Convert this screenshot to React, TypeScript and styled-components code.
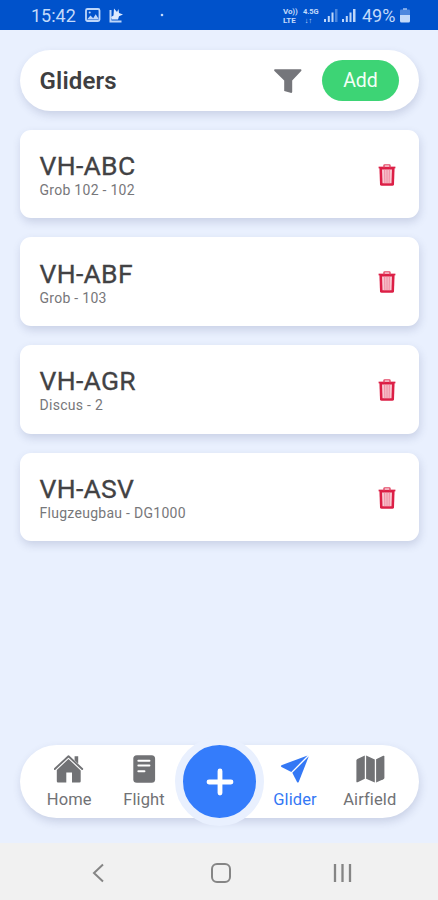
import React from "react";
import styled, { createGlobalStyle, css } from "styled-components";

const GlobalStyle = createGlobalStyle`
  * { box-sizing: border-box; }
  body { margin: 0; background: #e9f0fe; }
  button { border: 0; padding: 0; margin: 0; background: none; font: inherit; color: inherit; }
`;

const Screen = styled.div`
  width: 438px;
  height: 900px;
  display: flex;
  flex-direction: column;
  overflow: hidden;
  background: #e9f0fe;
  font-family: Roboto, sans-serif;
  color: #3f3f41;
`;

const StatusBar = styled.header`
  height: 29.5px;
  flex: none;
  display: flex;
  align-items: center;
  padding: 2px 28px 0 31px;
  background: #0052cb;
  color: #c3dafa;
`;

const Clock = styled.span`
  width: 54px;
  font-size: 18px;
  line-height: 20px;
`;

const StatusIcons = styled.svg`
  display: block;
  flex: none;
`;

const Network = styled.span<{ $width: number; $size: number }>`
  display: flex;
  flex-direction: column;
  width: ${(p) => p.$width}px;
  font-size: ${(p) => p.$size}px;
  line-height: 9px;
  font-weight: 700;
  white-space: nowrap;
  letter-spacing: -0.1px;
`;

const Spacer = styled.span`
  flex: 1;
`;

const Percent = styled.span`
  margin-left: 3px;
  width: 38px;
  font-size: 18px;
  line-height: 20px;
`;

const raised = css`
  background: #fff;
  box-shadow: 1px 4px 8px rgba(50, 60, 110, 0.17);
`;

const Content = styled.main`
  flex: 1;
  display: flex;
  flex-direction: column;
  padding: 20.5px 19px 0 20px;
`;

const TitleBar = styled.div`
  ${raised}
  height: 61px;
  border-radius: 31px;
  display: flex;
  align-items: center;
  padding: 0 20px 0 19.5px;
`;

const Title = styled.h1`
  flex: 1;
  margin: 0;
  font-size: 24px;
  line-height: 30px;
  font-weight: 600;
  letter-spacing: 0.15px;
`;

const FilterButton = styled.button`
  display: flex;
  color: #75767b;
  margin-right: 19px;
`;

const AddButton = styled.button`
  width: 77px;
  height: 41px;
  border-radius: 21px;
  background: #3dd475;
  color: #f3fff6;
  font-size: 19.5px;
  line-height: 24px;
`;

const CardList = styled.ul`
  list-style: none;
  margin: 18.8px 0 0;
  padding: 0;
  display: flex;
  flex-direction: column;
  gap: 19.2px;
`;

const Card = styled.li`
  ${raised}
  height: 88.5px;
  border-radius: 11px;
  display: flex;
  align-items: center;
  justify-content: space-between;
  padding: 2px 23px 0 19.5px;
`;

const Registration = styled.div`
  font-size: 26.5px;
  line-height: 30px;
  letter-spacing: 0.3px;
  color: #424244;
  -webkit-text-stroke: 0.3px #424244;
`;

const Model = styled.div`
  font-size: 14px;
  line-height: 18px;
  letter-spacing: 0.28px;
  color: #77777a;
`;

const DeleteButton = styled.button`
  display: flex;
`;

const TabBar = styled.nav`
  ${raised}
  flex: none;
  height: 73px;
  margin: 0 19px 25px 20px;
  border-radius: 37px;
  display: flex;
  align-items: center;
  justify-content: space-between;
  padding: 0 12px;
`;

const Tab = styled.button<{ $active?: boolean }>`
  width: 74.5px;
  height: 73px;
  padding-top: 9px;
  display: flex;
  flex-direction: column;
  align-items: center;
  justify-content: flex-start;
  gap: 6px;
  color: ${(p) => (p.$active ? "#3478f5" : "#717275")};
  font-size: 16.5px;
  line-height: 20px;
  letter-spacing: 0.1px;
`;

const CreateButton = styled.button`
  width: 89px;
  height: 89px;
  flex: none;
  margin: 0 -6.5px;
  border: 8px solid #e9f0fe;
  border-radius: 50%;
  background: #347cfb;
  display: flex;
  align-items: center;
  justify-content: center;
`;

const SystemBar = styled.footer`
  height: 57px;
  flex: none;
  background: #f1f1f1;
  display: flex;
  align-items: center;
  justify-content: space-between;
  padding: 2px 85px 0 88px;
`;

const Glyph = ({ children }: { children: React.ReactNode }) => (
  <svg width="30" height="30" viewBox="0 0 30 30" fill="currentColor">
    {children}
  </svg>
);

const HomeIcon = () => (
  <Glyph>
    <path d="M20.600 2.200h3.600v7.500l-3.600-3.400z" />
    <path d="M.8 15L14.500 2.200 28.200 15" fill="none" stroke="currentColor" strokeWidth="1.900" strokeLinecap="round" strokeLinejoin="round" />
    <path d="M14.500 5L26.700 16.400v10.900q0 1.200-1.200 1.200h-7.500V18.600h-5.700v9.900H4q-1.200 0-1.200-1.200V16z" />
  </Glyph>
);

const FlightIcon = () => (
  <Glyph>
    <rect x="4.300" y="1.200" width="21.800" height="27.600" rx="3.500" />
    <path d="M9.300 6.700h11.200M9.300 11.500h11.200M9.300 17.200h6.200" stroke="#fff" strokeWidth="1.900" strokeLinecap="round" />
  </Glyph>
);

const GliderIcon = () => (
  <Glyph>
    <path d="M27.600 1.400L1.500 11.200q-1.200.8 0 1.700L11.300 18z" />
    <path d="M28.800 2.300L18.700 28q-.9 1.200-1.700 0L12.300 18.800z" />
  </Glyph>
);

const AirfieldIcon = () => (
  <Glyph>
    <path d="M9.800 1.600v23.200l-7.200 3.500q-1.200.3-1.200-.8V6.500q0-1 1-1.500z" />
    <path d="M11.100 1.600l8.700 3.800v23.200l-8.700-3.800z" />
    <path d="M21.100 5.200l7.100-3.500q1.200-.3 1.200.8v21.200q0 1-1 1.500l-7.300 3.400z" />
  </Glyph>
);

const FunnelIcon = () => (
  <Glyph>
    <path d="M1.800 3.300h26q.9.300.6 1.500L19.200 14.600v11.300q-.3 1.300-1.700.9L11.200 25V14.600L1.200 4.800q-.3-1.200.6-1.500z" />
  </Glyph>
);

const TrashIcon = () => (
  <svg width="18" height="23" viewBox="0 0 18 23">
    <path d="M1.400 3.800h15.200l-.6 16.400q-.2 1.600-1.700 1.600H3.700q-1.500 0-1.700-1.600z" fill="#dc1f46" />
    <path d="M4 5.500h10l-.5 13.800h-9z" fill="#f8c6d0" />
    <path d="M6.700 5.500l.2 13.800M9 5.500v13.800M11.300 5.500l-.2 13.800" stroke="#ec7f95" strokeWidth=".9" fill="none" />
    <path d="M.6 3.500h16.800" stroke="#dc1f46" strokeWidth="1.700" />
    <path d="M6 3.400V1.500q0-.6.7-.6h4.600q.7 0 .7.6v1.900" stroke="#e34866" strokeWidth="1.400" fill="none" />
  </svg>
);

const Signal = ({ weak }: { weak?: boolean }) => (
  <StatusIcons width="18" height="17" viewBox="0 0 18 17" fill="#bfd7fa">
    <rect x="1" y="12" width="2" height="3" />
    <rect x="4.800" y="9" width="2" height="6" />
    <rect x="8.500" y="5.500" width="2" height="9.500" />
    <rect x="12" y="2" width="2.500" height="13" opacity={weak ? 0.4 : 1} />
  </StatusIcons>
);

const gliders = [
  { registration: "VH-ABC", model: "Grob 102 - 102" },
  { registration: "VH-ABF", model: "Grob - 103" },
  { registration: "VH-AGR", model: "Discus - 2" },
  { registration: "VH-ASV", model: "Flugzeugbau - DG1000" },
];

export default function App() {
  return (
    <Screen>
      <GlobalStyle />
      <StatusBar>
        <Clock>15:42</Clock>
        <StatusIcons width="82" height="18" viewBox="0 0 82 18">
          <rect x="1" y="2" width="13.500" height="12" rx="1.500" fill="none" stroke="#bdd6fa" strokeWidth="1.800" />
          <path d="M2 12.500l3.500-4 2.700 2.700 2.500-4 3.300 5.300z" fill="#bdd6fa" />
          <circle cx="4.700" cy="5.500" r="1" fill="#bdd6fa" />
          <path d="M25.500 3v11.500H36.500" fill="none" stroke="#bdd6fa" strokeWidth="2" />
          <path d="M29 1.500l3 3.500 1.500-3 .5 4 4 1.500-4 1.800-1 3.200h-6l-1-2.500 2.500-1.500z" fill="#dceaff" />
          <circle cx="77" cy="8" r="1.300" fill="#c3dafa" />
        </StatusIcons>
        <Spacer />
        <Network $width={20} $size={8}><span>Vo))</span><span>LTE</span></Network>
        <Network $width={20} $size={7.5}><span>4.5G</span><span>&nbsp;↓↑</span></Network>
        <Signal weak />
        <Signal />
        <Percent>49%</Percent>
        <StatusIcons width="10" height="15" viewBox="0 0 10 15" fill="#c3dafa">
          <rect x="3" width="4" height="2" opacity=".6" />
          <rect y="1.500" width="10" height="6" rx="1" opacity=".4" />
          <path d="M0 7h10v6q0 1.500-1.500 1.500h-7Q0 14.500 0 13z" />
        </StatusIcons>
      </StatusBar>
      <Content>
        <TitleBar>
          <Title>Gliders</Title>
          <FilterButton aria-label="Filter"><FunnelIcon /></FilterButton>
          <AddButton>Add</AddButton>
        </TitleBar>
        <CardList>
          {gliders.map((g) => (
            <Card key={g.registration}>
              <div>
                <Registration>{g.registration}</Registration>
                <Model>{g.model}</Model>
              </div>
              <DeleteButton aria-label="Delete"><TrashIcon /></DeleteButton>
            </Card>
          ))}
        </CardList>
      </Content>
      <TabBar>
        <Tab><HomeIcon />Home</Tab>
        <Tab><FlightIcon />Flight</Tab>
        <CreateButton aria-label="Create">
          <svg width="28" height="28" viewBox="0 0 28 28">
            <path d="M14 3v22M3 14h22" stroke="#fff" strokeWidth="4.800" strokeLinecap="round" />
          </svg>
        </CreateButton>
        <Tab $active><GliderIcon />Glider</Tab>
        <Tab><AirfieldIcon />Airfield</Tab>
      </TabBar>
      <SystemBar>
        <svg width="20" height="22" viewBox="0 0 20 22" fill="none" stroke="#858585" strokeWidth="2">
          <path d="M15 2.500L6 11l9 8.500" />
        </svg>
        <svg width="22" height="22" viewBox="0 0 22 22" fill="none" stroke="#858585" strokeWidth="2">
          <rect x="2" y="2" width="18" height="18" rx="5" />
        </svg>
        <svg width="20" height="20" viewBox="0 0 20 20" stroke="#858585" strokeWidth="2.300">
          <path d="M2 1v18M9.500 1v18M17 1v18" />
        </svg>
      </SystemBar>
    </Screen>
  );
}
